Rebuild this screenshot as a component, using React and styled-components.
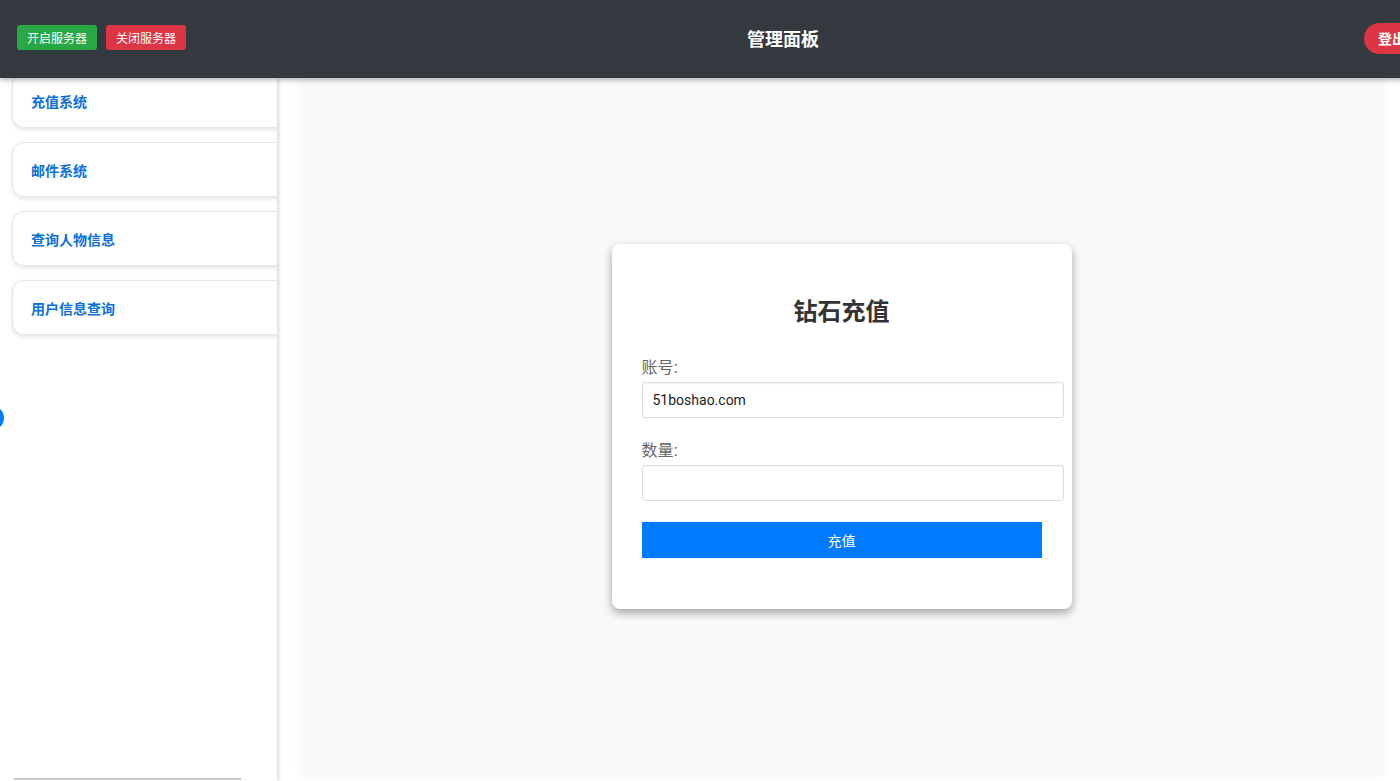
import React from 'react';
import styled, { createGlobalStyle } from 'styled-components';

const GlobalStyle = createGlobalStyle`
  html, body {
    margin: 0;
    padding: 0;
    height: 100%;
    overflow: hidden;
  }
  body {
    font-family: "Liberation Sans", "Noto Sans CJK SC", sans-serif;
    background: #fff;
  }
  #root {
    height: 100%;
  }
`;

const Page = styled.div`
  height: 100vh;
  display: flex;
  flex-direction: column;
  overflow: hidden;
`;

const Header = styled.header`
  position: relative;
  z-index: 2;
  flex: 0 0 78px;
  width: 1437px;
  box-sizing: border-box;
  display: flex;
  align-items: center;
  padding: 0 17px 2px;
  background: #343a40;
  box-shadow: 0 2px 5px rgba(0, 0, 0, 0.3);
`;

const ButtonGroup = styled.div`
  display: flex;
  gap: 9px;
  margin-bottom: 2px;
`;

const ServerButton = styled.button`
  height: 25px;
  padding: 0 10px;
  border: none;
  border-radius: 3px;
  font-family: inherit;
  font-size: 12px;
  color: #fff;
  background: ${(p) => (p.$danger ? '#dc3545' : '#28a745')};
`;

const Title = styled.h1`
  flex: 1;
  margin: 0;
  padding-left: 16px;
  text-align: center;
  color: #fff;
  font-size: 18px;
  font-weight: 700;
`;

const LogoutButton = styled.button`
  height: 31px;
  padding: 0 14px;
  border: none;
  border-radius: 16px;
  background: #dc3545;
  color: #fff;
  font-family: inherit;
  font-size: 14px;
  font-weight: 700;
`;

const Body = styled.div`
  flex: 1;
  display: flex;
  min-height: 0;
`;

const Sidebar = styled.aside`
  position: relative;
  z-index: 1;
  flex: 0 0 277px;
  box-sizing: border-box;
  padding-left: 12px;
  background: #fff;
  overflow: hidden;
  box-shadow: 2px 0 4px rgba(0, 0, 0, 0.15);
`;

const MenuList = styled.div`
  display: flex;
  flex-direction: column;
  gap: 14px;
  margin-top: -5px;
`;

const MenuCard = styled.div`
  width: 290px;
  height: 55px;
  box-sizing: border-box;
  display: flex;
  align-items: center;
  padding-left: 18px;
  background: #fff;
  border: 1px solid #e6e6e6;
  border-radius: 12px;
  box-shadow: 0 2px 4px rgba(0, 0, 0, 0.1);
  color: #0a6fd8;
  font-size: 14px;
  font-weight: 700;
`;

const ScrollThumb = styled.div`
  position: absolute;
  left: 14px;
  bottom: 1px;
  width: 227px;
  height: 2px;
  background: #c8c8c8;
`;

const Toggle = styled.div`
  position: fixed;
  left: -20px;
  top: 406px;
  width: 24px;
  height: 24px;
  border-radius: 50%;
  background: #007bff;
  z-index: 3;
`;

const Main = styled.main`
  flex: 1;
  display: flex;
  padding: 2px 16px 6px 22px;
`;

const Panel = styled.div`
  flex: 1;
  display: flex;
  align-items: center;
  justify-content: center;
  background: #f8f9fa;
  box-shadow: 0 0 8px rgba(0, 0, 0, 0.04);
`;

const FormCard = styled.div`
  width: 460px;
  box-sizing: border-box;
  padding: 30px;
  margin-top: -2px;
  background: #fff;
  border-radius: 8px;
  box-shadow: 0 4px 10px rgba(0, 0, 0, 0.35);
`;

const FormTitle = styled.h2`
  margin: 24px 0 32px;
  text-align: center;
  font-size: 24px;
  line-height: 28px;
  font-weight: 700;
  color: #333;
`;

const Field = styled.div`
  margin-bottom: 23px;
`;

const Label = styled.label`
  display: block;
  margin-bottom: 4px;
  font-size: 16px;
  line-height: 20px;
  color: #666;
`;

const Input = styled.input`
  display: block;
  width: 100%;
  box-sizing: content-box;
  height: 18px;
  padding: 8px 10px;
  border: 1px solid #ddd;
  border-radius: 3px;
  box-shadow: inset 0 1px 2px rgba(0, 0, 0, 0.05);
  font-family: "Roboto", "Liberation Sans", sans-serif;
  font-size: 14px;
  color: #222;
  outline: none;
`;

const SubmitButton = styled.button`
  display: block;
  width: 100%;
  height: 36px;
  margin: -2px 0 21px;
  border: none;
  background: #007bff;
  color: #fff;
  font-family: inherit;
  font-size: 14px;
`;

const menu = ['充值系统', '邮件系统', '查询人物信息', '用户信息查询'];

export default function App() {
  return (
    <Page>
      <GlobalStyle />
      <Header>
        <ButtonGroup>
          <ServerButton>开启服务器</ServerButton>
          <ServerButton $danger>关闭服务器</ServerButton>
        </ButtonGroup>
        <Title>管理面板</Title>
        <LogoutButton>登出</LogoutButton>
      </Header>
      <Body>
        <Sidebar>
          <MenuList>
            {menu.map((m) => (
              <MenuCard key={m}>{m}</MenuCard>
            ))}
          </MenuList>
          <ScrollThumb />
        </Sidebar>
        <Main>
          <Panel>
            <FormCard>
              <FormTitle>钻石充值</FormTitle>
              <Field>
                <Label>账号:</Label>
                <Input defaultValue="51boshao.com" />
              </Field>
              <Field>
                <Label>数量:</Label>
                <Input defaultValue="" />
              </Field>
              <SubmitButton>充值</SubmitButton>
            </FormCard>
          </Panel>
        </Main>
      </Body>
      <Toggle />
    </Page>
  );
}
